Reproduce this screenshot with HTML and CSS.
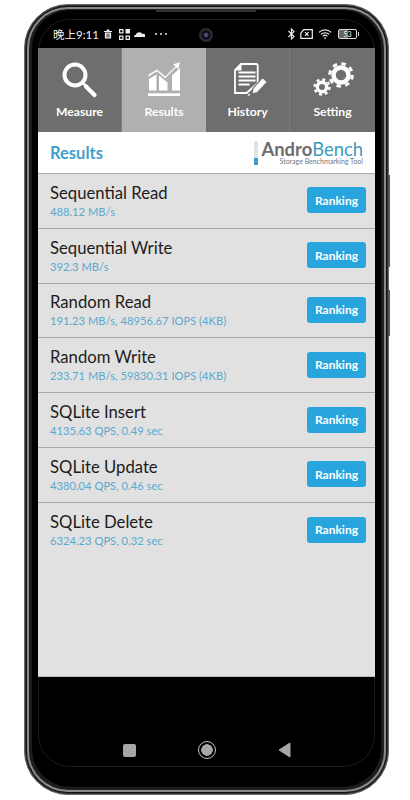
FILE: index.html
```html
<!DOCTYPE html>
<html lang="zh">
<head>
<meta charset="utf-8">
<title>AndroBench Results</title>
<link rel="stylesheet" href="styles.css">
</head>
<body>
<span class="side-key side-power"></span>
<span class="side-key side-volume"></span>
<div class="phone">
  <div class="bezel">
    <span class="grille"></span>
    <span class="screen-edge"></span>
    <div class="status">
      <div class="status-left">
        <span class="clock">晚上9:11</span>
        <svg width="8" height="10" viewBox="0 0 9 10"><path d="M0 1.5h9v1.2H0zM3 0h3v1.5H3zM1 3.2h7V10H1zM3 4.4v4.400h.9V4.400zM5.100 4.400v4.400H6V4.400z" fill="#eee" fill-rule="evenodd"/></svg>
        <svg class="st-grid" width="11" height="11" viewBox="0 0 11 11"><path d="M0 0h4.500v4.500H0zM1.200 1.200v2.100h2.100V1.200zM6.500 0H11v4.500H6.500zM0 6.500h4.500V11H0zM1.200 7.700v2.100h2.100V7.700zM6.500 6.500H11V11H6.500zM7.700 7.700v2.100h2.100V7.700z" fill="#eee" fill-rule="evenodd"/></svg>
        <svg width="11" height="6" viewBox="0 0 11 6"><path d="M0 6a2 2 0 0 1 1.800-2.200A3.800 3.800 0 0 1 8.600 2.900 2 2 0 0 1 11 6z" fill="#eee"/></svg>
        <span class="dots"><i></i><i></i><i></i></span>
      </div>
      <span class="camera"></span>
      <div class="status-right">
        <svg width="7" height="12" viewBox="0 0 7 12"><path d="M.5 3l5.500 5.500L3.400 11V1L6 3.500.5 9" fill="none" stroke="#eee" stroke-width="1.100"/></svg>
        <svg width="13" height="10" viewBox="0 0 13 10"><path d="M3.800.7h8.500v8.600H.8V4.200z" fill="none" stroke="#eee" stroke-width="1.200"/><path d="M5 3.200l3.600 3.600M8.600 3.200L5 6.800" stroke="#eee" stroke-width="1.200"/></svg>
        <svg width="15" height="12" viewBox="0 0 16 12"><path d="M1 4.200a9.600 9.600 0 0 1 13 0M3 6.400a6.600 6.600 0 0 1 9 0M5 8.500a3.600 3.600 0 0 1 5 0" fill="none" stroke="#eee" stroke-width="1.200"/><path d="M6.200 10a2 2 0 0 1 2.600 0L7.500 11.600z" fill="#eee"/></svg>
        <span class="battery"><span class="battery-num">53</span></span>
      </div>
    </div>
    <main class="app">
      <nav class="tabs">
        <div class="tab">
          <svg width="44" height="38" viewBox="60 60 44 38"><circle cx="77" cy="75" r="10.500" fill="none" stroke="#fff" stroke-width="4"/><path d="M85 83l4 4" stroke="#fff" stroke-width="2.500"/><path d="M88 86.500l8.500 8.500" stroke="#fff" stroke-width="4.200" stroke-linecap="round"/></svg>
          <span>Measure</span>
        </div>
        <div class="tab tab-active">
          <svg width="44" height="38" viewBox="142 60 44 38"><path d="M148 93.300h32V96h-32z" fill="#fff"/><path d="M149 90.500V79l7.500-4.500V90.500zM159 90.500V75.500l8.500 7v8zM172 90.500V75.500l8-7.500v22.500z" fill="#fff"/><path d="M148 75l9-5.500 8.300 7L175.500 66.500l-2.300-2.300 6.800-2-1.800 7-2-2-11 11-8.300-7-8 5z" fill="#fff"/></svg>
          <span>Results</span>
        </div>
        <div class="tab">
          <svg width="44" height="38" viewBox="226 60 44 38"><path d="M241 64h15.500a1.200 1.200 0 0 1 1.200 1.200V83l-11 10H235V70z" fill="none" stroke="#fff" stroke-width="1.800"/><path d="M241.500 63.500V70.500H234.500z" fill="#fff"/><path d="M238.500 71.500h17v2h-17zM238.500 75.500h17v2h-17zM238.500 79.500h17v2h-17zM238.500 83.500h11v2h-11z" fill="#fff"/><path d="M262.500 77.500l5 4.500-10 10.500-5.500 1.500.8-5.500z" fill="#fff" stroke="#6e6e6e" stroke-width="1.200"/><path d="M247.500 96l1.500-2.500 1.500 1.500z" fill="#fff"/></svg>
          <span>History</span>
        </div>
        <div class="tab tab-last">
          <svg width="44" height="38" viewBox="311 60 44 38"><circle cx="341" cy="75" r="7.500" fill="none" stroke="#fff" stroke-width="4.500"/><circle cx="341" cy="75" r="11.300" fill="none" stroke="#fff" stroke-width="3" stroke-dasharray="4.440 4.440"/><circle cx="322" cy="87" r="4.700" fill="none" stroke="#fff" stroke-width="3.400"/><circle cx="322" cy="87" r="7.500" fill="none" stroke="#fff" stroke-width="2.400" stroke-dasharray="2.950 2.950"/></svg>
          <span>Setting</span>
        </div>
      </nav>
      <header class="head">
        <h1>Results</h1>
        <div class="logo">
          <span class="logo-bar"></span>
          <div class="logo-text">
            <div class="logo-name"><b>Andro</b><span>Bench</span></div>
            <div class="logo-tag">Storage Benchmarking Tool</div>
          </div>
        </div>
      </header>
      <ul class="rows">
        <li class="row"><div><div class="name">Sequential Read</div><div class="val">488.12 MB/s</div></div><span class="btn">Ranking</span></li>
        <li class="row"><div><div class="name">Sequential Write</div><div class="val">392.3 MB/s</div></div><span class="btn">Ranking</span></li>
        <li class="row"><div><div class="name">Random Read</div><div class="val">191.23 MB/s, 48956.67 IOPS (4KB)</div></div><span class="btn">Ranking</span></li>
        <li class="row"><div><div class="name">Random Write</div><div class="val">233.71 MB/s, 59830.31 IOPS (4KB)</div></div><span class="btn">Ranking</span></li>
        <li class="row"><div><div class="name">SQLite Insert</div><div class="val">4135.63 QPS, 0.49 sec</div></div><span class="btn">Ranking</span></li>
        <li class="row"><div><div class="name">SQLite Update</div><div class="val">4380.04 QPS, 0.46 sec</div></div><span class="btn">Ranking</span></li>
        <li class="row row-last"><div><div class="name">SQLite Delete</div><div class="val">6324.23 QPS, 0.32 sec</div></div><span class="btn">Ranking</span></li>
      </ul>
    </main>
    <div class="navbar">
      <span class="nav-square"></span>
      <span class="nav-circle"></span>
      <svg width="13" height="16" viewBox="0 0 13 16"><path d="M12 1v14L1 8z" fill="#a6a6a6" stroke="#a6a6a6" stroke-linejoin="round"/></svg>
    </div>
  </div>
</div>
</body>
</html>
```
FILE: styles.css
```css
* { box-sizing: border-box; }
html, body { margin: 0; height: 100%; }
body {
  width: 410px;
  height: 800px;
  background: #fff;
  position: relative;
  overflow: hidden;
  padding: 4px 21px 5px 24px;
  font-family: Lato, "Noto Sans", "Noto Sans CJK SC", sans-serif;
}
.phone {
  height: 791px;
  border-radius: 44px;
  background: #1c1c1c;
  border: 1px solid #666;
  box-shadow: inset 0 0 0 1px #333, inset 0 0 0 2px #111, inset 0 0 0 4px #8a8a8a, inset 0 0 0 5px #222;
  padding: 5px 7px 7px;
}
.side-key { position: absolute; background: #555; width: 2px; right: 20px; }
.side-power { top: 175px; height: 92px; }
.side-volume { top: 290px; height: 46px; }
.bezel {
  position: relative;
  height: 100%;
  background: #000;
  border-radius: 38px;
  padding: 0 6px;
  display: flex;
  flex-direction: column;
}
.grille {
  position: absolute;
  top: 0;
  left: 124px;
  width: 100px;
  height: 2px;
  background: #333;
}
.screen-edge {
  position: absolute;
  inset: 9px 6px 20px;
  border: 1px solid #1d1d1d;
  border-radius: 32px;
}
.status {
  position: relative;
  height: 38px;
  flex: none;
  padding: 10px 18px 0 15px;
  display: flex;
  align-items: center;
  justify-content: space-between;
  color: #eee;
}
.status-left { display: flex; align-items: center; gap: 4px; }
.clock { font-size: 11.500px; margin-right: 1px; }
.st-grid { margin-left: 3px; }
.dots { display: flex; gap: 3px; margin-left: 6px; }
.dots i { width: 2px; height: 2px; border-radius: 50%; background: #eee; }
.camera {
  position: absolute;
  left: 161px;
  top: 18px;
  width: 14px;
  height: 14px;
  border-radius: 50%;
  background: radial-gradient(circle, #4a4a78 0 1.500px, #0a0a18 3px 4px, #2a2a34 5px 7px);
}
.status-right { display: flex; align-items: center; gap: 5px; }
.battery {
  width: 19px;
  height: 10px;
  border: 1px solid #ddd;
  border-radius: 2px;
  display: flex;
  align-items: center;
  justify-content: center;
  position: relative;
  background: linear-gradient(90deg, #666 53%, transparent 53%);
}
.battery::after {
  content: "";
  position: absolute;
  right: -3px;
  top: 2px;
  width: 1.500px;
  height: 4px;
  background: #ddd;
}
.battery-num { font-size: 7px; line-height: 1; color: #fff; }
.app {
  position: relative;
  height: 629px;
  flex: none;
  background: #e1e1e1;
  display: flex;
  flex-direction: column;
  border-bottom: 1px solid #bbb;
}
.tabs {
  height: 84px;
  display: flex;
  flex: none;
  background: #6e6e6e;
}
.tab {
  flex: 0 0 84px;
  display: flex;
  flex-direction: column;
  align-items: center;
  color: #fff;
  font-size: 12.200px;
  line-height: 16px;
  font-weight: 700;
  padding-top: 12px;
  gap: 6px;
  border-right: 1px solid #7c7c7c;
}
.tab-active { background: #b0b0b0; border-right: 0; }
.tab-last { border-right: 0; flex: 1; }
.head {
  height: 42px;
  flex: none;
  background: #fff;
  border-bottom: 1px solid #aaa;
  display: flex;
  align-items: center;
  justify-content: space-between;
  padding: 0 12px;
}
h1 {
  margin: 0;
  font-size: 16.500px;
  font-weight: 700;
  color: #3fa0cf;
}
.logo { display: flex; gap: 3px; height: 24px; }
.logo-bar {
  width: 4px;
  background: linear-gradient(#e2e2e2 0 70%, #3a9fc5 70%);
}
.logo-name { font-size: 18.400px; line-height: 17px; text-align: right; }
.logo-name b { color: #6d6d6d; font-weight: 700; }
.logo-name span { color: #3d9bbd; font-weight: 400; }
.logo-tag { font-size: 7px; line-height: 7px; color: #777; text-align: right; }
.rows { list-style: none; margin: 0; padding: 0; }
.row {
  height: 54.800px;
  padding: 0 9px 0 12px;
  display: flex;
  align-items: center;
  justify-content: space-between;
  border-bottom: 1px solid #a8a8a8;
}
.row-last { border-bottom: 0; }
.name { font-size: 16.700px; line-height: 18px; color: #1c1c1c; }
.val { font-size: 11.200px; line-height: 13px; color: #5aa9cf; margin-top: 3px; }
.btn {
  width: 59px;
  height: 26px;
  margin-bottom: 1px;
  background: #29a5de;
  color: #fff;
  border-radius: 3px;
  font-size: 12px;
  font-weight: 700;
  display: flex;
  align-items: center;
  justify-content: center;
}
.navbar {
  flex: 1;
  display: flex;
  align-items: center;
  justify-content: center;
  gap: 62px;
  padding: 36px 0 0;
}
.nav-square { width: 13px; height: 13px; border-radius: 2px; background: #a6a6a6; }
.nav-circle {
  width: 18px;
  height: 18px;
  border-radius: 50%;
  border: 1.500px solid #c0c0c0;
  background: radial-gradient(circle, #a6a6a6 0 5.500px, #000 6px);
}
```
